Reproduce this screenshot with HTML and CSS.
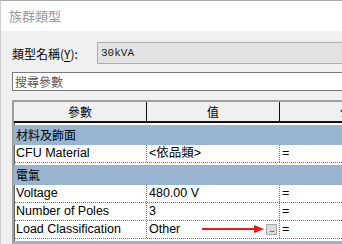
FILE: index.html
```html
<!DOCTYPE html>
<html lang="zh-Hant">
<head>
    <meta charset="UTF-8">
    <title>族群類型</title>
    <link rel="stylesheet" href="styles.css">
</head>
<body>
    <div class="win">
        <div class="titlebar">族群類型</div>
        <div class="content">
            <div class="typerow">
                <div class="typelabel">類型名稱(<u>Y</u>):</div>
                <div class="combo">30kVA</div>
            </div>
            <div class="search">搜尋參數</div>
            <div class="props">
                <div class="row head">
                    <div class="c1">參數</div>
                    <div class="c2">值</div>
                    <div class="c3">公式</div>
                </div>
                <div class="group">材料及飾面</div>
                <div class="row item">
                    <div class="c1">CFU Material</div>
                    <div class="c2">&lt;依品類&gt;</div>
                    <div class="c3">=</div>
                </div>
                <div class="group">電氣</div>
                <div class="row item">
                    <div class="c1">Voltage</div>
                    <div class="c2">480.00 V</div>
                    <div class="c3">=</div>
                </div>
                <div class="row item">
                    <div class="c1">Number of Poles</div>
                    <div class="c2">3</div>
                    <div class="c3">=</div>
                </div>
                <div class="row item">
                    <div class="c1">Load Classification</div>
                    <div class="c2">Other<span class="more">...</span></div>
                    <div class="c3">=</div>
                </div>
                <div class="group"></div>
            </div>
        </div>
        <!-- annotation arrow drawn over the grid -->
        <svg class="arrow" width="64" height="10" viewBox="0 0 64 10">
            <line x1="0" y1="5" x2="54" y2="5" stroke="#f01414" stroke-width="2"/>
            <polygon points="52,1 62,5 52,9" fill="#f01414"/>
        </svg>
    </div>
</body>
</html>
```

FILE: styles.css
```css
* {box-sizing: border-box;}
html, body {margin: 0; padding: 0;}
body {width: 342px; height: 244px; overflow: hidden; background: #f0f0f0;
    font-family: "Liberation Sans", "Noto Sans CJK TC", sans-serif; font-size: 12.5px; color: #000;}

.win {position: relative; width: 700px; height: 300px; background: #f0f0f0;
    border-top: 1px solid #a8a8a8; border-left: 1px solid #cfcfcf;}
.titlebar {height: 30px; line-height: 30px; padding-left: 8px; background: #fff;
    font-family: "Noto Sans CJK TC", sans-serif; font-size: 13px; color: #9a9a9a;}

.content {padding: 11px 0 0 11px;}
.typerow {display: flex; align-items: center; height: 22px;}
.typelabel {width: 85px; font-family: "Noto Sans CJK TC", sans-serif; font-size: 12px;}
.typelabel u {text-underline-offset: 2px;}
.combo {width: 500px; height: 22px; line-height: 20px; padding-left: 3px;
    border: 1px solid #adadad; background: #e3e3e3;
    font-family: "Liberation Mono", monospace; font-size: 11px; color: #1a1a1a;}

.search {width: 600px; height: 19px; line-height: 17px; margin-top: 8px; padding-left: 2px;
    border: 1px solid #7a7a7a; background: #fff;
    font-family: "Noto Sans CJK TC", sans-serif; font-size: 12px; color: #555;}

.props {width: 600px; margin-top: 9px; background: #fff;
    border-top: 2px solid #a0a0a0; border-left: 2px solid #a0a0a0;
    box-shadow: inset 1px 1px 0 #696969;}
.row {display: grid; grid-template-columns: 133px 133px 1fr;}
.row > div {white-space: nowrap; overflow: hidden;}

.head {height: 21px; background: #f0f0f0; border-bottom: 2px solid #111;
    font-family: "Noto Sans CJK TC", sans-serif; font-size: 12px; line-height: 19px; text-align: center;}
.head .c1, .head .c2 {border-right: 1px solid #111;}
.head .c3 {width: 144px;}

.group {height: 20px; line-height: 20px; margin-top: 2px; padding-left: 2px; background: #99b4d1;
    font-family: "Noto Sans CJK TC", sans-serif; font-size: 12px;}

.item {height: 18px; line-height: 17px; border-bottom: 1px dotted #777;}
.item > div {padding-left: 2px;}
.item .c1, .item .c2 {border-right: 1px dotted #777;}
.item .c2 {display: flex; align-items: center; justify-content: space-between;}
.item .c3 {padding-left: 2px;}

.more {display: block; width: 11px; height: 11px; margin-right: 2px; padding-top: 1px;
    border: 1px solid #a8a8a8; background: #dcdcdc;
    font-family: "DejaVu Sans", sans-serif; font-size: 8px; line-height: 8px; letter-spacing: -1px;
    text-align: center; color: #222; overflow: visible;}

.arrow {position: absolute; left: 201px; top: 223px;}
```
